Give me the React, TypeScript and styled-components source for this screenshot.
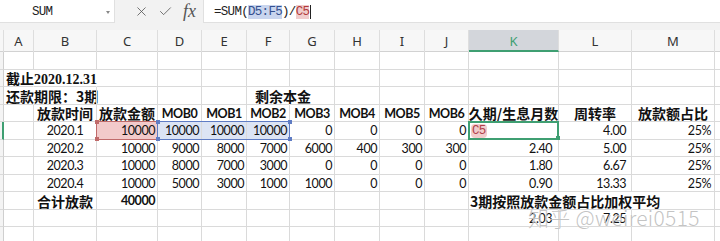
import { Fragment } from "react";
import styled, { createGlobalStyle } from "styled-components";
import { X, Check } from "lucide-react";

const GlobalStyle = createGlobalStyle`
  html, body { margin: 0; padding: 0; background: #fff; }
  body { overflow: hidden; }
`;

// column widths: row header, A..N
const COLS = [4, 30, 63, 61, 44, 45, 43, 45, 45, 45, 44, 90, 73, 83, 10];
const TEMPLATE = COLS.map((w) => `${w}px`).join(" ");
const LETTERS = ["A", "B", "C", "D", "E", "F", "G", "H", "I", "J", "K", "L", "M", ""];
const LINE = "#dadada";
const GREEN = "#3f9f72";

const Page = styled.div`
  position: relative;
  width: 720px;
  height: 241px;
  overflow: hidden;
  background: #fff;
  font-family: Lato, "Noto Sans", sans-serif;
  color: #111;
`;

const Toolbar = styled.div`
  display: flex;
  align-items: flex-start;
  height: 30px;
  background: #f2f2f2;
`;

const NameBox = styled.div`
  display: flex;
  align-items: center;
  justify-content: space-between;
  box-sizing: border-box;
  width: 115px;
  height: 23px;
  padding: 2px 4px 0 32px;
  background: #fff;
  border-right: 1px solid #e0e0e0;
  border-bottom: 1px solid #e0e0e0;
  font-family: "Liberation Mono", monospace;
  font-size: 12.5px;
  letter-spacing: -0.7px;
  color: #222;
`;

const Caret = styled.span`
  width: 0;
  height: 0;
  border-left: 2.5px solid transparent;
  border-right: 2.5px solid transparent;
  border-top: 3px solid #888;
`;

const ToolIcons = styled.div`
  display: flex;
  align-items: center;
  gap: 9px;
  width: 88px;
  height: 23px;
  box-sizing: border-box;
  padding-left: 19px;
  color: #555;
`;

const Fx = styled.span`
  font-family: "Liberation Serif", serif;
  font-style: italic;
  font-size: 18px;
  color: #555;
  margin-left: 1px;
`;

const FormulaInput = styled.div`
  flex: 1;
  display: flex;
  align-items: center;
  box-sizing: border-box;
  height: 23px;
  padding: 2px 0 0 10px;
  background: #fff;
  border-left: 1px solid #e0e0e0;
  border-bottom: 1px solid #e0e0e0;
  font-family: "Liberation Mono", monospace;
  font-size: 12.5px;
  letter-spacing: -0.7px;
  color: #222;
  white-space: pre;
`;

const Ref = styled.span<{ $tone: "blue" | "red" }>`
  background: ${(p) => (p.$tone === "blue" ? "#c9d5ee" : "#f0cccc")};
  color: ${(p) => (p.$tone === "blue" ? "#34508f" : "#b23a3a")};
`;

const TextCaret = styled.span`
  display: inline-block;
  width: 1px;
  height: 14px;
  background: #222;
  margin-left: 1px;
`;

const HeaderRow = styled.div`
  display: grid;
  grid-template-columns: ${TEMPLATE};
  height: 22px;
  background: #f7f7f7;
  box-sizing: border-box;
  border-bottom: 1px solid #d2d2d2;
`;

const HeadCell = styled.div<{ $active?: boolean }>`
  display: flex;
  align-items: center;
  justify-content: center;
  box-sizing: border-box;
  border-right: 1px solid #dedede;
  font-family: "Noto Sans", sans-serif;
  font-size: 13px;
  color: ${(p) => (p.$active ? GREEN : "#333")};
  background: ${(p) => (p.$active ? "#d3d6db" : "transparent")};
  border-bottom: ${(p) => (p.$active ? `2px solid ${GREEN}` : "none")};
  padding-top: ${(p) => (p.$active ? "2px" : "0")};
`;

const Body = styled.div`
  display: grid;
  grid-template-columns: ${TEMPLATE};
  grid-auto-rows: 17.5px;
`;

const RowHead = styled.div<{ $row: number; $active?: boolean }>`
  grid-row: ${(p) => p.$row};
  grid-column: 1;
  background: #f4f4f4;
  box-sizing: border-box;
  border-right: ${(p) => (p.$active ? `2px solid ${GREEN}` : "1px solid #cfcfcf")};
  border-bottom: 1px solid ${LINE};
`;

type Kind = "num" | "cjk" | "serif" | "mob";
type Align = "left" | "center" | "right";

interface CellDef {
  v: string;
  kind?: Kind;
  align?: Align;
  bold?: boolean;
  pad?: number;
  open?: boolean;
  fill?: "pink" | "blue";
  edit?: boolean;
}

const FONTS: Record<Kind, string> = {
  num: `font-family: Lato, sans-serif; font-size: 12.5px; letter-spacing: -0.45px;`,
  mob: `font-family: Lato, sans-serif; font-size: 12.5px; font-weight: 700; letter-spacing: -0.45px;`,
  cjk: `font-family: "Noto Sans CJK SC", sans-serif; font-size: 14px; font-weight: 700;`,
  serif: `font-family: "Liberation Serif", "Noto Sans CJK SC", serif; font-size: 14px; font-weight: 700;`,
};

const Cell = styled.div<{
  $row: number;
  $col: number;
  $kind: Kind;
  $align: Align;
  $bold?: boolean;
  $pad: number;
  $open?: boolean;
  $fill?: string;
}>`
  grid-row: ${(p) => p.$row};
  grid-column: ${(p) => p.$col};
  display: flex;
  align-items: center;
  justify-content: ${(p) => (p.$align === "left" ? "flex-start" : p.$align === "center" ? "center" : "flex-end")};
  min-width: 0;
  box-sizing: border-box;
  white-space: nowrap;
  padding: 1px ${(p) => p.$pad}px 0;
  border-right: 1px solid ${(p) => (p.$open ? "transparent" : LINE)};
  border-bottom: 1px solid ${LINE};
  background: ${(p) => (p.$fill === "pink" ? "#f2caca" : p.$fill === "blue" ? "#dce4f4" : "transparent")};
  ${(p) => FONTS[p.$kind]}
  ${(p) => (p.$bold ? "font-weight: 700;" : "")}
  color: #111;
`;

const EditRef = styled.span`
  font-family: "Liberation Mono", monospace;
  font-size: 12.5px;
  letter-spacing: -0.7px;
  color: #b0404a;
  background: #f1cccc;
  border-radius: 4px;
  padding: 0 1px;
`;

const Outline = styled.div<{ $color: string; $width: number; $cols: string }>`
  grid-row: 5;
  grid-column: ${(p) => p.$cols};
  position: relative;
  margin: -1px 0 0 -1px;
  border: ${(p) => p.$width}px solid ${(p) => p.$color};
  pointer-events: none;
`;

const Handle = styled.span<{ $color: string; $x: "l" | "r"; $y: "t" | "b" }>`
  position: absolute;
  width: 4px;
  height: 4px;
  background: ${(p) => p.$color};
  ${(p) => (p.$x === "l" ? "left: -2.5px;" : "right: -2.5px;")}
  ${(p) => (p.$y === "t" ? "top: -2.5px;" : "bottom: -2.5px;")}
`;

const Watermark = styled.div`
  position: absolute;
  left: 528px;
  top: 202px;
  font-family: "Noto Sans CJK SC", sans-serif;
  font-size: 21px;
  font-weight: 300;
  letter-spacing: 0.3px;
  color: rgba(170, 170, 170, 0.7);
  text-shadow: 0 0 1px rgba(255, 255, 255, 0.9);
  white-space: nowrap;
  pointer-events: none;
`;

const n = (v: string, pad = 2, extra: Partial<CellDef> = {}): CellDef => ({ v, kind: "num", align: "right", pad, ...extra });
const c = (v: string, extra: Partial<CellDef> = {}): CellDef => ({ v, kind: "cjk", align: "center", ...extra });
const m = (v: string): CellDef => ({ v, kind: "mob", align: "center" });
const E = null;

// excel rows 1..11, columns A..N
const ROWS: (CellDef | null)[][] = [
  [E, E, E, E, E, E, E, E, E, E, E, E, E, E],
  [{ v: "截止2020.12.31", kind: "serif", align: "left", open: true }, { v: "", open: true }, E, E, E, E, E, E, E, E, E, E, E, E],
  [c("还款期限：3期", { align: "left", open: true }), E, E, E, E, c("剩余本金", { align: "left", pad: 8, open: true }), E, E, E, E, E, E, E, E],
  [E, c("放款时间"), c("放款金额"), m("MOB0"), m("MOB1"), m("MOB2"), m("MOB3"), m("MOB4"), m("MOB5"), m("MOB6"), c("久期/生息月数"), c("周转率"), c("放款额占比"), E],
  [E, { v: "2020.1", kind: "num", align: "center" }, n("10000", 2, { fill: "pink" }), n("10000", 2, { fill: "blue" }), n("10000", 2, { fill: "blue" }), n("10000", 2, { fill: "blue" }), n("0"), n("0"), n("0"), n("0"), { v: "C5", edit: true, align: "left", pad: 2 }, n("4.00", 5), n("25%", 3), E],
  [E, { v: "2020.2", kind: "num", align: "center" }, n("10000"), n("9000"), n("8000"), n("7000"), n("6000"), n("400"), n("300"), n("300"), n("2.40", 6), n("5.00", 5), n("25%", 3), E],
  [E, { v: "2020.3", kind: "num", align: "center" }, n("10000"), n("8000"), n("7000"), n("3000"), n("0"), n("0"), n("0"), n("0"), n("1.80", 6), n("6.67", 5), n("25%", 3), E],
  [E, { v: "2020.4", kind: "num", align: "center" }, n("10000"), n("5000"), n("3000"), n("1000"), n("1000"), n("0"), n("0"), n("0"), n("0.90", 6), n("13.33", 5), n("25%", 3), E],
  [E, c("合计放款"), n("40000", 2, { bold: true }), E, E, E, E, E, E, E, c("3期按照放款金额占比加权平均", { align: "left", open: true, pad: 1 }), { v: "", open: true }, E, E],
  [E, E, E, E, E, E, E, E, E, E, n("2.03", 6), n("7.25", 5), E, E],
  [E, E, E, E, E, E, E, E, E, E, E, E, E, E],
];

function Corners({ color }: { color: string }) {
  return (
    <>
      <Handle $color={color} $x="l" $y="t" />
      <Handle $color={color} $x="r" $y="t" />
      <Handle $color={color} $x="l" $y="b" />
      <Handle $color={color} $x="r" $y="b" />
    </>
  );
}

export default function App() {
  return (
    <Page>
      <GlobalStyle />
      <Toolbar>
        <NameBox>
          <span>SUM</span>
          <Caret />
        </NameBox>
        <ToolIcons>
          <X size={15} strokeWidth={1.3} />
          <Check size={15} strokeWidth={1.3} />
          <Fx>fx</Fx>
        </ToolIcons>
        <FormulaInput>
          =SUM(<Ref $tone="blue">D5:F5</Ref>)/<Ref $tone="red">C5</Ref>
          <TextCaret />
        </FormulaInput>
      </Toolbar>

      <HeaderRow>
        <HeadCell />
        {LETTERS.map((l, i) => (
          <HeadCell key={i} $active={l === "K"}>
            {l}
          </HeadCell>
        ))}
      </HeaderRow>

      <Body>
        {ROWS.map((row, ri) => (
          <Fragment key={ri}>
            <RowHead $row={ri + 1} $active={ri === 4} />
            {row.map((cell, ci) => {
              const d = cell ?? { v: "" };
              return (
                <Cell
                  key={ci}
                  $row={ri + 1}
                  $col={ci + 2}
                  $kind={d.kind ?? "num"}
                  $align={d.align ?? "right"}
                  $bold={d.bold}
                  $pad={d.pad ?? 2}
                  $open={d.open}
                  $fill={d.fill}
                >
                  {d.edit ? <EditRef>{d.v}</EditRef> : d.v}
                </Cell>
              );
            })}
          </Fragment>
        ))}
        <Outline $color="#c06a6a" $width={1} $cols="4 / 5">
          <Corners color="#c06a6a" />
        </Outline>
        <Outline $color="#5f7cc4" $width={1} $cols="5 / 8">
          <Corners color="#5f7cc4" />
        </Outline>
        <Outline $color={GREEN} $width={2} $cols="12 / 13">
          <Handle $color={GREEN} $x="r" $y="b" />
        </Outline>
      </Body>

      <Watermark>知乎 @weirei0515</Watermark>
    </Page>
  );
}
